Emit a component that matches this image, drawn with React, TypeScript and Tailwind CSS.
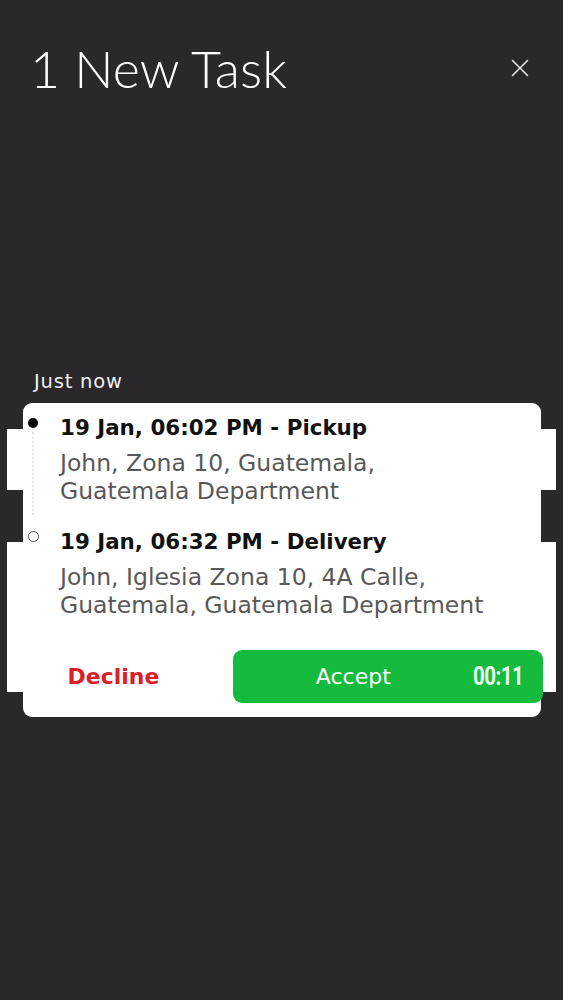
import { X } from 'lucide-react';

interface Stop {
  time: string;
  kind: string;
  lines: string[];
  done: boolean;
}

const stops: Stop[] = [
  { time: '19 Jan, 06:02 PM', kind: 'Pickup', lines: ['John, Zona 10, Guatemala,', 'Guatemala Department'], done: true },
  { time: '19 Jan, 06:32 PM', kind: 'Delivery', lines: ['John, Iglesia Zona 10, 4A Calle,', 'Guatemala, Guatemala Department'], done: false },
];

const App = () => {
  return (
    <div className="w-[563px] h-[1000px] bg-[#2a282a] overflow-hidden" style={{ fontFamily: '"DejaVu Sans", "Noto Sans", sans-serif' }}>
      {/* Header */}
      <div className="flex items-center justify-between pl-[30px] pr-[28px] pt-[38px]">
        <h1 className="text-[52px] leading-[60px] font-light text-white" style={{ fontFamily: 'Lato, "Noto Sans", sans-serif' }}>
          1 New Task
        </h1>
        <X className="w-[30px] h-[30px] text-[#ececec]" strokeWidth={1.2} />
      </div>

      <div className="h-[271px]" />

      {/* Task */}
      <p className="pl-[34px] text-[19.5px] leading-[25px] tracking-[0.8px] text-[#f0f0f0]">Just now</p>

      <div className="relative mt-[9px] mx-[23px] w-[518px]">
        {/* side strips */}
        <div className="absolute -left-[16px] -right-[15px] top-[26px] h-[61px] bg-white" />
        <div className="absolute -left-[16px] -right-[15px] top-[139px] h-[150px] bg-white" />

        <div className="relative bg-white rounded-[9px] pt-[11px] pb-[14px]">
          <div className="flex flex-col gap-[13px]">
            {stops.map((stop, idx) => (
              <div key={idx} className={`flex gap-[17px] ${idx === 0 ? 'pb-[10px]' : ''}`}>
                <div className="w-[20px] flex flex-col items-center shrink-0">
                  {stop.done ? (
                    <span className="mt-[4px] w-[10px] h-[10px] rounded-full bg-black" />
                  ) : (
                    <span className="mt-[3px] w-[11px] h-[11px] rounded-full border border-[#555]" />
                  )}
                  {idx === 0 && <span className="flex-1 -mb-[10px] mt-[4px] border-l-2 border-dotted border-[#e2e2e2]" />}
                </div>
                <div>
                  <p className="text-[21.4px] leading-[28px] mb-[7px] font-bold text-[#111]">
                    {stop.time} - {stop.kind}
                  </p>
                  {stop.lines.map((line, i) => (
                    <p key={i} className="text-[23.5px] leading-[28px] text-[#585858]">
                      {line}
                    </p>
                  ))}
                </div>
              </div>
            ))}
          </div>

          {/* Actions */}
          <div className="flex items-center mt-[31px]">
            <button className="w-[181px] mr-[29px] text-center text-[22px] font-semibold text-[#d9202a]">Decline</button>
            <button className="w-[310px] h-[53px] -mr-[2px] rounded-[9px] bg-[#14bb3c] flex items-center pl-[12px] pr-[20px]">
              <span className="flex-1 text-center text-[22px] text-white">Accept</span>
              <span className="text-[25px] font-bold text-[#eaffee] tracking-tight scale-x-[0.82] origin-right" style={{ fontFamily: 'Roboto, "Liberation Sans", sans-serif' }}>
                00:11
              </span>
            </button>
          </div>
        </div>
      </div>
    </div>
  );
};

export default App;
